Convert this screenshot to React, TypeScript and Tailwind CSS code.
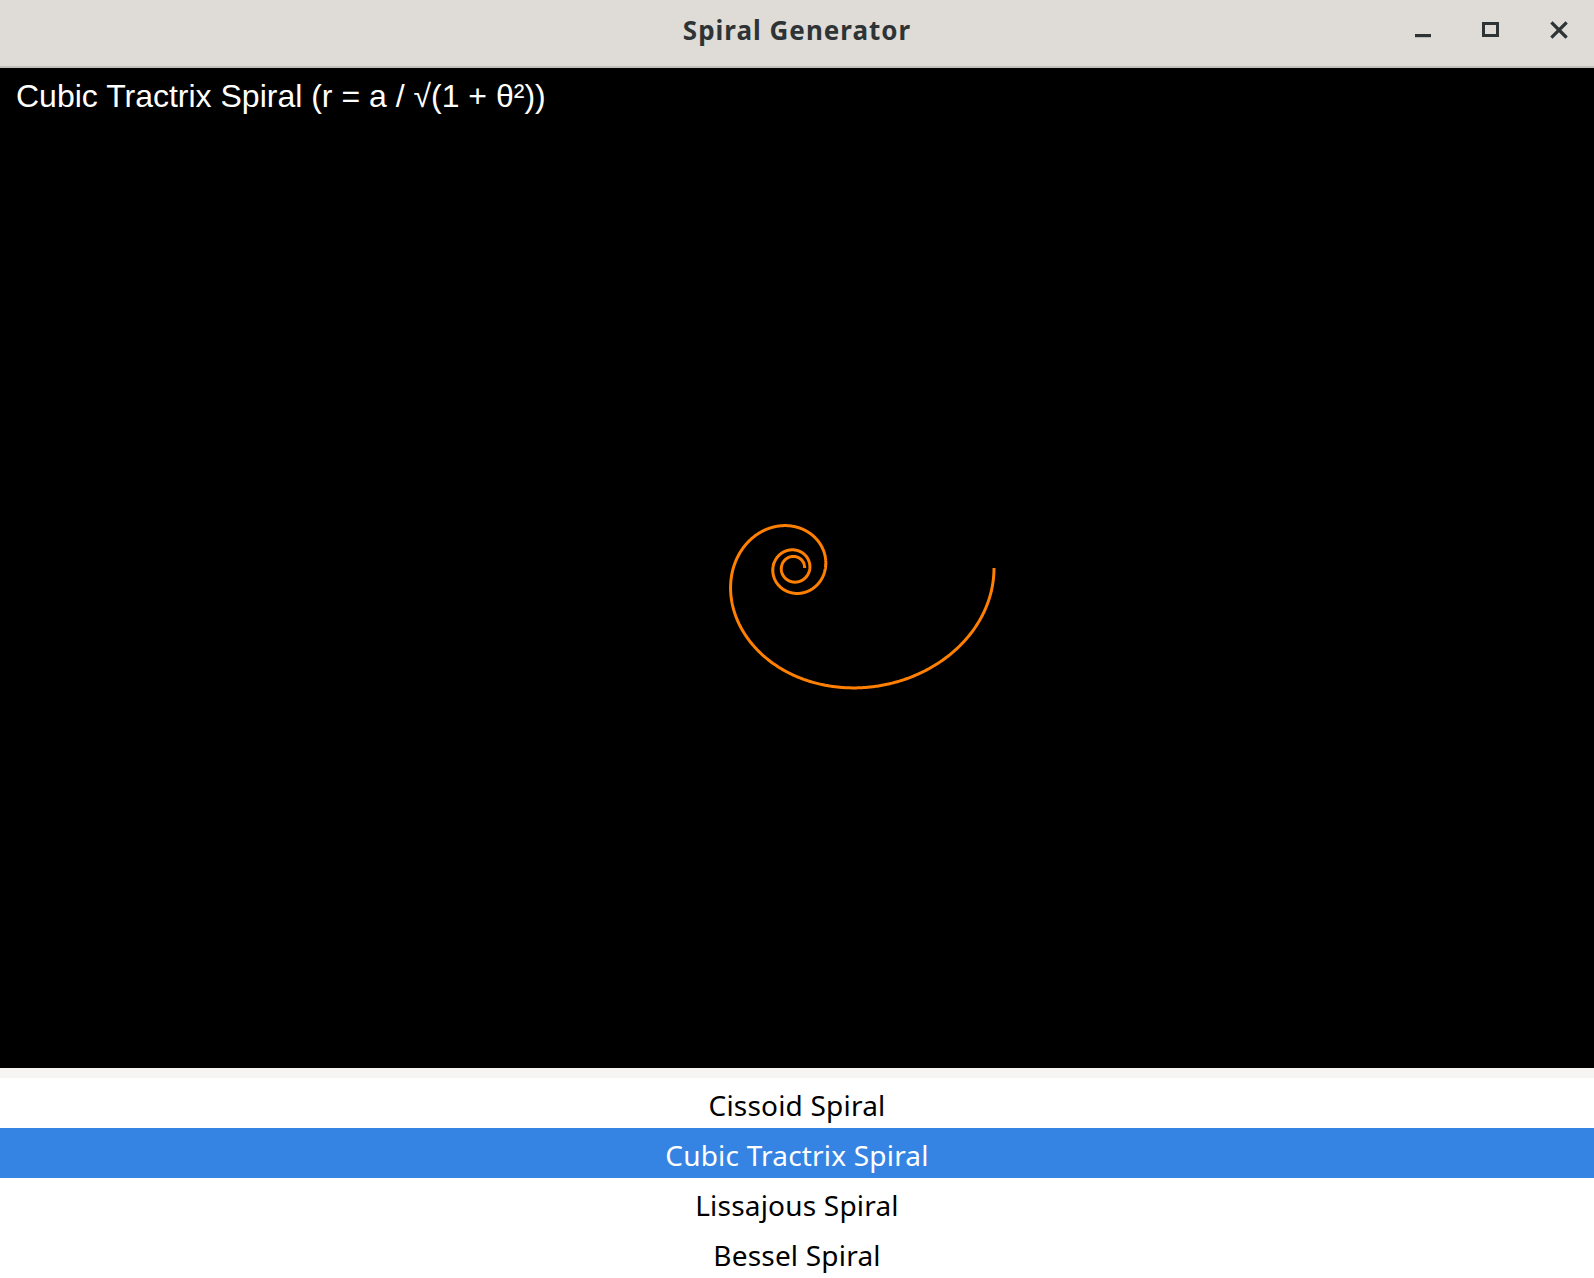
import { useMemo } from 'react';

const spirals = ['Cissoid Spiral', 'Cubic Tractrix Spiral', 'Lissajous Spiral', 'Bessel Spiral'];
const selected = 'Cubic Tractrix Spiral';

const buildTractrix = (cx: number, cy: number, a: number) => {
  const pts: string[] = [];
  const steps = 2400;
  const maxT = Math.PI * 6;
  for (let i = 0; i <= steps; i++) {
    const t = (i / steps) * maxT;
    const r = a / Math.sqrt(1 + t * t);
    const x = cx + r * Math.cos(t);
    const y = cy + r * Math.sin(t);
    pts.push(`${i === 0 ? 'M' : 'L'}${x.toFixed(2)} ${y.toFixed(2)}`);
  }
  return pts.join(' ');
};

const TitleBar = () => (
  <div className="h-[68px] bg-[#dfdcd8] border-b-2 border-[#c3bfba] grid grid-cols-[1fr_auto_1fr] items-start">
    <div />
    <div className="pt-[14px] text-[26px] tracking-[1px] font-bold text-[#2e3436] leading-[32px] font-['Noto_Sans','Open_Sans',sans-serif]">
      Spiral Generator
    </div>
    <div className="flex justify-end gap-[48px] pr-[25px] pt-[20px]">
      {/* minimize */}
      <svg width="20" height="20" viewBox="0 0 20 20">
        <rect x="2" y="14" width="16" height="3.2" fill="#2e3436" />
      </svg>
      {/* maximize */}
      <svg width="20" height="20" viewBox="0 0 20 20">
        <rect x="2.5" y="3.5" width="14" height="12" fill="none" stroke="#2e3436" strokeWidth="3" />
      </svg>
      {/* close */}
      <svg width="20" height="20" viewBox="0 0 20 20">
        <path d="M3.5 3.5 L16.5 16.5 M16.5 3.5 L3.5 16.5" stroke="#2e3436" strokeWidth="3.2" strokeLinecap="square" />
      </svg>
    </div>
  </div>
);

export default function App() {
  const path = useMemo(() => buildTractrix(794, 500, 200), []);

  return (
    <div className="w-[1594px] h-[1278px] flex flex-col bg-white overflow-hidden">
      <TitleBar />

      {/* Canvas */}
      <div className="relative h-[1000px] bg-black">
        <svg className="absolute inset-0" width="1594" height="1000" viewBox="0 0 1594 1000">
          <path d={path} fill="none" stroke="#ff8000" strokeWidth="3" strokeLinejoin="round" />
        </svg>
        <div className="relative pt-[12px] pl-4 text-white text-[32px] leading-[32px] font-['Liberation_Sans',Arial,sans-serif]">
          Cubic Tractrix Spiral (r = a / √(1 + θ²))
        </div>
      </div>

      <div className="h-[10px] bg-[#f6f5f4]" />

      {/* Spiral list */}
      <div className="flex flex-col">
        {spirals.map((name) => (
          <div
            key={name}
            className={`h-[50px] pt-[4px] flex items-center justify-center text-[28px] tracking-[0.2px] font-['Noto_Sans','Open_Sans',sans-serif] ${
              name === selected ? 'bg-[#3584e4] text-white' : 'bg-white text-black'
            }`}
          >
            {name}
          </div>
        ))}
      </div>
    </div>
  );
}
